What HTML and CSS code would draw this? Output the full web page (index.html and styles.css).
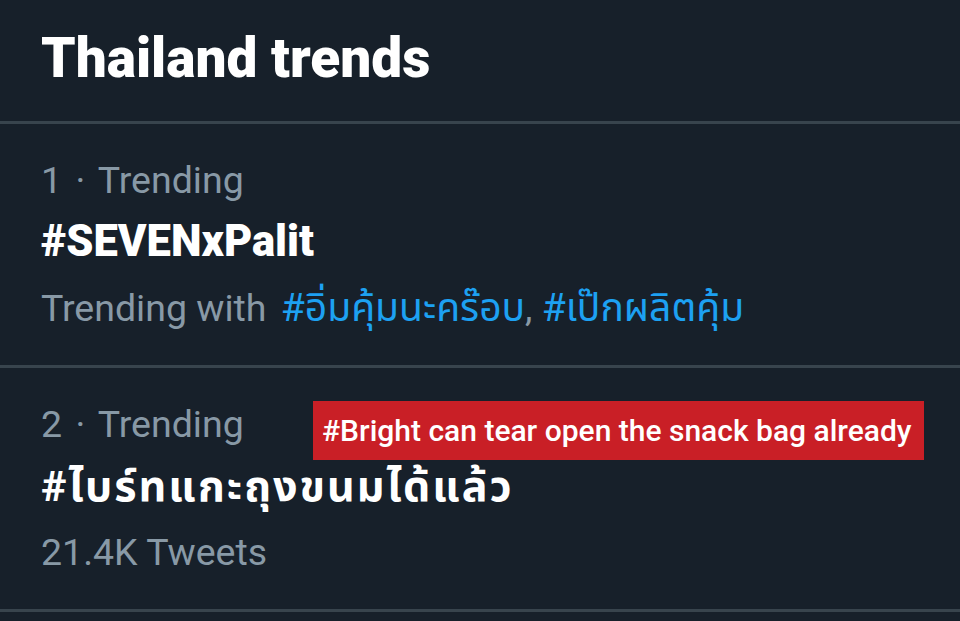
FILE: index.html
```html
<!DOCTYPE html>
<html lang="en">
<head>
<meta charset="UTF-8" />
<meta name="viewport" content="width=device-width, initial-scale=1" />
<title>Thailand trends</title>
<link rel="stylesheet" href="styles.css">
</head>
<body>
<div class="panel">
  <h2 class="panel-title">Thailand trends</h2>

  <div class="trend">
    <div class="trend-meta">1 · Trending</div>
    <div class="trend-name">#SEVENxPalit</div>
    <div class="trend-sub">Trending with <a class="tag first">#อิ่มคุ้มนะคร๊อบ</a>, <a class="tag">#เป๊กผลิตคุ้ม</a></div>
  </div>

  <div class="trend">
    <div class="trend-meta">2 · Trending</div>
    <div class="trend-name thai">#ไบร์ทแกะถุงขนมได้แล้ว</div>
    <div class="trend-sub">21.4K Tweets</div>
    <div class="caption">#Bright can tear open the snack bag already</div>
  </div>
</div>
</body>
</html>
```

FILE: styles.css
```css
body { margin: 0; background: #17202a; font-family: Roboto, "Noto Sans", "Noto Sans Thai", sans-serif; }
.panel { width: 960px; height: 621px; overflow: hidden; }
.panel-title { margin: 0; padding: 11px 41px 16px; font-size: 55px; line-height: 94px; font-weight: 900; color: #fff; border-bottom: 3px solid #38444d; }
.trend { position: relative; padding: 26px 41px 23px; border-bottom: 3px solid #38444d; }
.trend-meta { font-size: 37.5px; line-height: 60px; color: #8899a6; word-spacing: 4px; }
.trend-name { font-size: 43.5px; line-height: 64px; font-weight: 900; color: #fff; }
.trend-name.thai { font-size: 43px; font-weight: 700; letter-spacing: 2px; }
.trend-sub { font-size: 37.5px; line-height: 68px; color: #8899a6; }
.tag { color: #1da1f2; font-size: 39px; }
.tag.first { margin-left: 5px; }
.caption { position: absolute; left: 313px; top: 33px; width: 611px; height: 59px; box-sizing: border-box; padding-left: 9px; background: #c91f26; color: #fff; font-size: 30px; font-weight: 500; line-height: 59px; white-space: nowrap; }
```
